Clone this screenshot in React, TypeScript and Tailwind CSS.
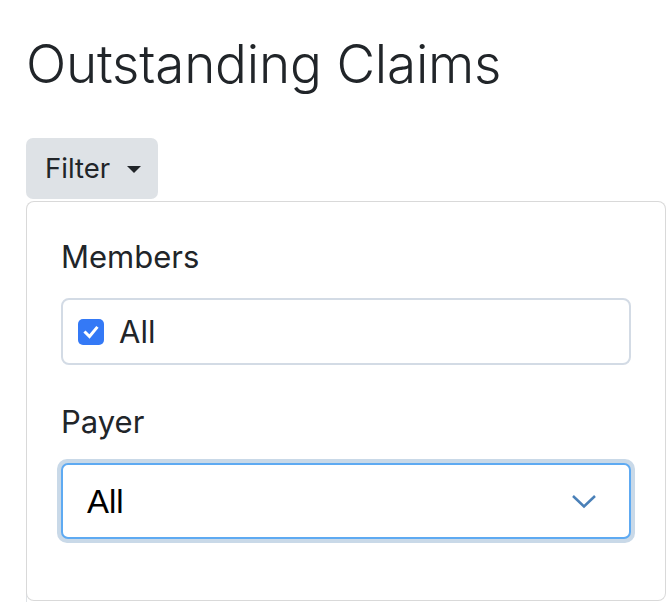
import React from 'react';

export default function App() {
  const rows = [0, 1, 2, 3];
  return (
    <div className="relative h-[602px] w-[666px] overflow-hidden bg-white font-['Inter',sans-serif] text-[#212529]">
      <h1 className="pl-[26px] pt-[33px] text-[53px] font-light leading-[62px] tracking-[-0.2px]">
        Outstanding Claims
      </h1>

      <div className="relative ml-[26px] mt-[43px]">
        <button className="flex h-[61px] w-[132px] items-center gap-[17px] rounded-[7px] bg-[#dee2e6] pl-[19px] text-[27.5px] leading-none text-[#212529]">
          Filter
          <svg width="14" height="7" viewBox="0 0 14 7" className="mt-[1px]">
            <path d="M0 0 L14 0 L7 7 Z" fill="#212529" />
          </svg>
        </button>

        {/* table underneath the open menu */}
        <div className="mt-[63px] w-[800px] border-l border-t border-[#dee2e6]">
          <div className="h-[97px] border-b-2 border-[#212529]" />
          {rows.map((r) => (
            <div key={r} className="h-[82px] border-b border-[#dee2e6]" />
          ))}
        </div>

        <div className="absolute left-0 top-[63px] h-[400px] w-[640px] rounded-[8px] border border-black/15 bg-white px-[34px] pt-[35px]">
          <div className="text-[31px] leading-[40px]">Members</div>
          <div className="mt-[21px] flex h-[67px] items-center rounded-[8px] border-2 border-[#d3dbe5] pl-[15px]">
            <span className="flex h-[26px] w-[26px] items-center justify-center rounded-[5px] bg-[#3479f6]">
              <svg width="18" height="18" viewBox="0 0 18 18">
                <path d="M3.5 9.5 L7.5 13.5 L14.5 5" fill="none" stroke="white" strokeWidth="3" strokeLinecap="square" />
              </svg>
            </span>
            <span className="ml-[15px] text-[31px] leading-none">All</span>
          </div>

          <div className="mt-[37px] text-[31px] leading-[40px]">Payer</div>
          <div className="-mx-[4px] mt-[17px] rounded-[10px] bg-[#c9d9e8] p-[4px]">
            <div className="flex h-[76px] items-center justify-between rounded-[7px] border-2 border-[#5eaaf2] bg-white pl-[24px] pr-[32px]">
              <span className="font-['Liberation_Sans',sans-serif] text-[33px] leading-none text-black">All</span>
              <svg width="26" height="15" viewBox="0 0 26 15">
                <path d="M2 2 L13 12.5 L24 2" fill="none" stroke="#4a80b8" strokeWidth="2.5" />
              </svg>
            </div>
          </div>
        </div>
      </div>
    </div>
  );
}
